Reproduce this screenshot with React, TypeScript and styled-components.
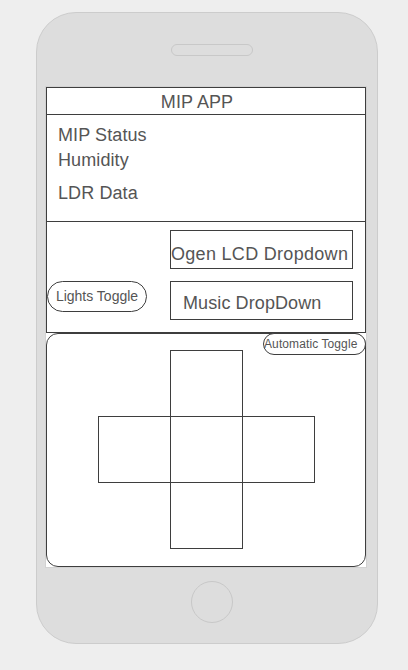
import styled, { createGlobalStyle } from 'styled-components';

const GlobalStyle = createGlobalStyle`
    html, body {
        margin: 0;
        padding: 0;
        background: #EEEEEE;
        font-family: "Liberation Sans", Arial, sans-serif;
    }
    * {
        box-sizing: border-box;
    }
`

const crossCells = [
    { col: 2, row: 1 },
    { col: 1, row: 2 },
    { col: 2, row: 2 },
    { col: 3, row: 2 },
    { col: 2, row: 3 },
];

const App = () => {
    return (
        <Page>
            <GlobalStyle />
            <Phone>
                <Speaker />
                <Screen>
                    <Header>MIP APP</Header>
                    <InfoSection>
                        <InfoLine>MIP Status</InfoLine>
                        <InfoLine>Humidity</InfoLine>
                        <InfoLine $spaced>LDR Data</InfoLine>
                    </InfoSection>
                    <Controls>
                        <LeftColumn>
                            <Pill>Lights Toggle</Pill>
                        </LeftColumn>
                        <RightColumn>
                            <DropBox $inset={0} $tracking={0.3} $top={13}>Ogen LCD Dropdown</DropBox>
                            <DropBox $inset={12} $tracking={0.1} $top={11}>Music DropDown</DropBox>
                        </RightColumn>
                    </Controls>
                    <Pad>
                        <SmallPill>Automatic Toggle</SmallPill>
                        <Cross>
                            {crossCells.map((cell) =>
                                <Cell key={`${cell.col}-${cell.row}`} $col={cell.col} $row={cell.row} />
                            )}
                        </Cross>
                    </Pad>
                </Screen>
                <HomeButton />
            </Phone>
        </Page>
    );
}

export default App;

const Page = styled.div`
    width: 408px;
    height: 670px;
    padding: 12px 0 0 36px;
`

const Phone = styled.div`
    width: 342px;
    height: 632px;
    background: #DDDDDD;
    border: 1px solid #CCCCCC;
    border-radius: 40px;
    padding: 31px 0 0 9px;
    display: flex;
    flex-direction: column;
    align-items: flex-start;
`

const Speaker = styled.div`
    align-self: center;
    width: 82px;
    height: 12px;
    border: 1px solid #C8C8C8;
    border-radius: 6px;
    margin: 0 0 31px 0;
`

const Screen = styled.div`
    width: 320px;
    height: 480px;
    background: #FFFFFF;
    box-shadow: 0 0 0 1px #D2D2D2;
    display: flex;
    flex-direction: column;
    color: #555555;
`

const Header = styled.div`
    border: 1px solid #3E3E3E;
    padding: 2px 18px 0 0;
    line-height: 24px;
    font-size: 18px;
    letter-spacing: 0.1px;
    text-align: center;
`

const InfoSection = styled.div`
    height: 107px;
    border: 1px solid #3E3E3E;
    border-top: none;
    padding: 8px 0 0 11px;
    display: flex;
    flex-direction: column;
`

const InfoLine = styled.div<{ $spaced?: boolean }>`
    font-size: 18px;
    line-height: 25px;
    letter-spacing: 0.1px;
    margin-top: ${(p) => (p.$spaced ? '8px' : '0')};
`

const Controls = styled.div`
    height: 111px;
    border: 1px solid #3E3E3E;
    border-top: none;
    display: grid;
    grid-template-columns: 123px 183px;
`

const LeftColumn = styled.div`
    padding-top: 59px;
`

const RightColumn = styled.div`
    padding-top: 8px;
    display: flex;
    flex-direction: column;
    gap: 12px;
`

const Pill = styled.div`
    width: 100px;
    height: 31px;
    border: 1px solid #3E3E3E;
    border-radius: 16px;
    background: #FFFFFF;
    font-size: 14px;
    line-height: 29px;
    text-align: center;
    white-space: nowrap;
`

const DropBox = styled.div<{ $inset: number; $tracking: number; $top: number }>`
    width: 183px;
    height: 39px;
    border: 1px solid #3E3E3E;
    padding: ${(p) => p.$top}px 0 0 ${(p) => p.$inset}px;
    font-size: 18px;
    letter-spacing: ${(p) => p.$tracking}px;
    line-height: 20px;
    white-space: nowrap;
    overflow: hidden;
`

const Pad = styled.div`
    position: relative;
    flex: 1;
    border: 1px solid #3E3E3E;
    border-radius: 12px;
    display: flex;
    justify-content: center;
    align-items: flex-start;
    padding-top: 16px;
`

const SmallPill = styled.div`
    position: absolute;
    top: -1px;
    right: -1px;
    width: 103px;
    height: 22px;
    border: 1px solid #3E3E3E;
    border-radius: 11px;
    background: #FFFFFF;
    font-size: 12px;
    letter-spacing: 0.1px;
    line-height: 20px;
    white-space: nowrap;
`

const Cross = styled.div`
    display: grid;
    grid-template-columns: repeat(3, 72px);
    grid-template-rows: repeat(3, 66px);
`

const Cell = styled.div<{ $col: number; $row: number }>`
    grid-column: ${(p) => p.$col};
    grid-row: ${(p) => p.$row};
    width: 73px;
    height: 67px;
    border: 1px solid #3E3E3E;
`

const HomeButton = styled.div`
    align-self: center;
    width: 42px;
    height: 42px;
    margin-top: 14px;
    border: 1px solid #C8C8C8;
    border-radius: 50%;
`
